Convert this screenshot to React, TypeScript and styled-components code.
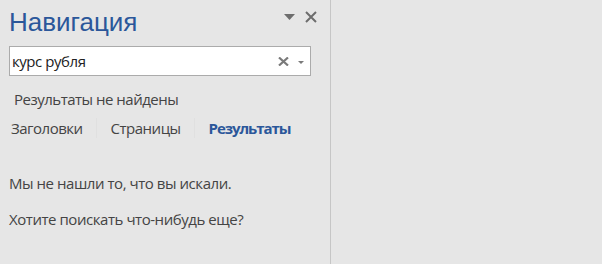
import styled, { createGlobalStyle } from "styled-components";

const GlobalStyle = createGlobalStyle`
  html, body {
    margin: 0;
    padding: 0;
    background: #e6e6e6;
  }
  body {
    font-family: "Open Sans", "Noto Sans", sans-serif;
    color: #444;
  }
`;

type TabProps = {
  active?: boolean;
};

const tabs = ["Заголовки", "Страницы", "Результаты"];

const App = () => {
  return (
    <>
      <GlobalStyle />
      <Page>
        <Pane>
          <Header>
            <Title>Навигация</Title>
            <HeaderIcons>
              <TriangleBtn>
                <svg width="11" height="6" viewBox="0 0 11 6">
                  <path d="M0 0 H11 L5.5 6 Z" fill="#6d6d6d" />
                </svg>
              </TriangleBtn>
              <CloseBtn>
                <svg width="12" height="12" viewBox="0 0 12 12">
                  <path d="M1 1 L11 11 M11 1 L1 11" stroke="#6d6d6d" strokeWidth="2" />
                </svg>
              </CloseBtn>
            </HeaderIcons>
          </Header>

          <SearchBox>
            <SearchText>курс рубля</SearchText>
            <ClearBtn>
              <svg width="11" height="9" viewBox="0 0 11 9">
                <path d="M1 0.5 L10 8.5 M10 0.5 L1 8.5" stroke="#7a7a7a" strokeWidth="2.2" />
              </svg>
            </ClearBtn>
            <DropBtn>
              <svg width="6" height="3" viewBox="0 0 6 3">
                <path d="M0 0 H6 L3 3 Z" fill="#7a7a7a" />
              </svg>
            </DropBtn>
          </SearchBox>

          <Status>Результаты не найдены</Status>

          <Tabs>
            {tabs.map((t, i) => (
              <Tab key={t} active={i === 2}>{t}</Tab>
            ))}
          </Tabs>

          <Message>
            <p>Мы не нашли то, что вы искали.</p>
            <p>Хотите поискать что-нибудь еще?</p>
          </Message>
        </Pane>
        <Rest />
      </Page>
    </>
  );
};

export default App;

const Page = styled.div`
  display: flex;
  width: 602px;
  height: 264px;
  overflow: hidden;
`;

const Pane = styled.div`
  width: 331px;
  flex-shrink: 0;
  border-right: 1px solid #c6c6c6;
  box-sizing: border-box;
  display: flex;
  flex-direction: column;
`;

const Rest = styled.div`
  flex: 1;
  background: #e6e6e6;
`;

const Header = styled.div`
  display: flex;
  align-items: flex-start;
  justify-content: space-between;
  padding: 4px 13px 0 9px;
  height: 42px;
  box-sizing: border-box;
`;

const Title = styled.h1`
  margin: 0;
  font-family: "Liberation Sans", Arial, sans-serif;
  font-size: 26px;
  font-weight: 400;
  color: #2b579a;
  line-height: 36px;
`;

const HeaderIcons = styled.div`
  display: flex;
  align-items: center;
  gap: 10px;
  padding-top: 7px;
`;

const TriangleBtn = styled.div`
  display: flex;
  align-items: center;
  height: 12px;
`;

const CloseBtn = styled.div`
  display: flex;
  align-items: center;
`;

const SearchBox = styled.div`
  margin: 4px 0 0 9px;
  width: 302px;
  height: 30px;
  box-sizing: border-box;
  border: 1px solid #ababab;
  background: #fff;
  display: flex;
  align-items: center;
  padding: 0 6px 0 2px;
`;

const SearchText = styled.div`
  flex: 1;
  font-size: 15px;
  letter-spacing: -0.45px;
  color: #222;
`;

const ClearBtn = styled.div`
  display: flex;
  align-items: center;
  margin-right: 9px;
`;

const DropBtn = styled.div`
  display: flex;
  align-items: center;
  padding-top: 2px;
`;

const Status = styled.div`
  margin: 13px 0 0 14px;
  font-size: 15px;
  line-height: 20px;
  letter-spacing: -0.5px;
`;

const Tabs = styled.div`
  display: flex;
  margin: 9px 0 0 0;
  padding-left: 10px;
`;

const Tab = styled.div<TabProps>`
  font-size: 15px;
  line-height: 20px;
  letter-spacing: ${({ active }) => (active ? "-1.05px" : "-0.5px")};
  padding: 0 13px 0 1px;
  margin-right: 13px;
  border-right: 1px solid #e0e0e0;
  color: ${({ active }) => (active ? "#2b579a" : "#444")};
  font-weight: ${({ active }) => (active ? 700 : 400)};

  &:last-child {
    border-right: none;
  }
`;

const Message = styled.div`
  margin-top: 35px;
  padding-left: 9px;
  font-size: 15px;
  line-height: 20px;
  letter-spacing: -0.45px;

  p {
    margin: 0 0 16px 0;
  }
`;
